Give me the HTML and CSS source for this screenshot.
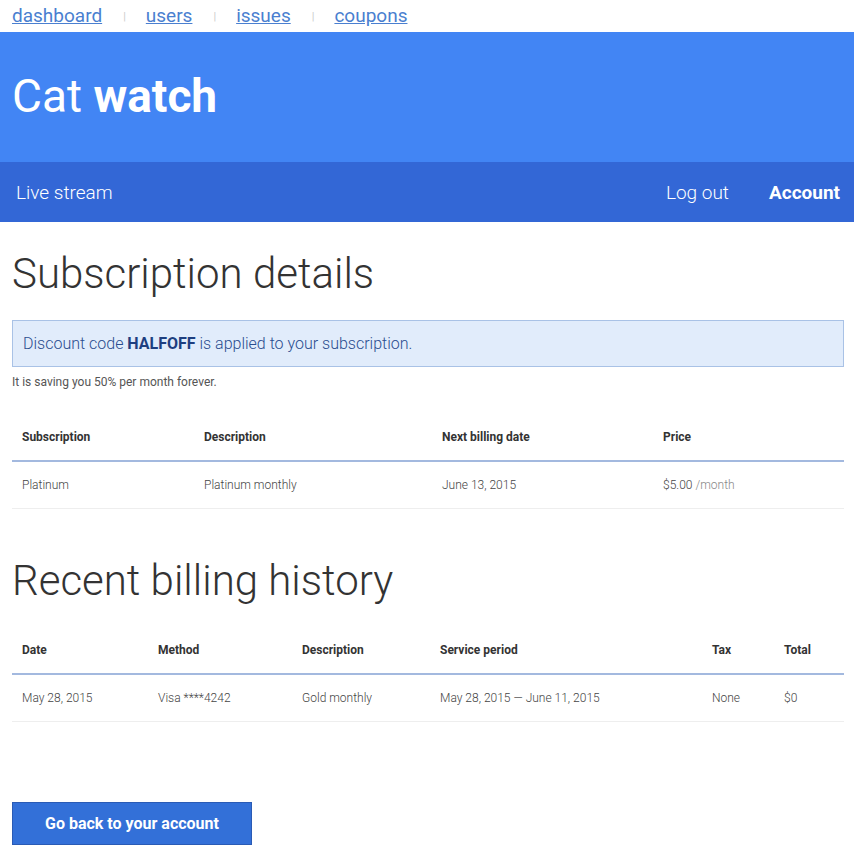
FILE: index.html
```html
<!DOCTYPE html>
<html>
<head>
<meta charset="utf-8">
<link rel="stylesheet" href="styles.css">
</head>
<body>
<nav class="toplinks">
  <a href="#">dashboard</a><span class="sep">|</span>
  <a href="#">users</a><span class="sep">|</span>
  <a href="#">issues</a><span class="sep">|</span>
  <a href="#">coupons</a>
</nav>
<header class="brand">
  <h1>Cat <b>watch</b></h1>
</header>
<div class="navbar">
  <span class="nav-item">Live stream</span>
  <div class="nav-right">
    <span class="nav-item">Log out</span>
    <span class="nav-item strong">Account</span>
  </div>
</div>
<main class="content">
  <h2>Subscription details</h2>
  <div class="notice">Discount code <b>HALFOFF</b> is applied to your subscription.</div>
  <p class="note">It is saving you 50% per month forever.</p>
  <table class="tbl sub">
    <thead>
      <tr><th class="c1">Subscription</th><th class="c2">Description</th><th class="c3">Next billing date</th><th>Price</th></tr>
    </thead>
    <tbody>
      <tr><td>Platinum</td><td>Platinum monthly</td><td>June 13, 2015</td><td>$5.00 <span class="muted">/month</span></td></tr>
    </tbody>
  </table>
  <h2 class="h2b">Recent billing history</h2>
  <table class="tbl hist">
    <thead>
      <tr><th class="d1">Date</th><th class="d2">Method</th><th class="d3">Description</th><th class="d4">Service period</th><th class="d5">Tax</th><th>Total</th></tr>
    </thead>
    <tbody>
      <tr><td>May 28, 2015</td><td>Visa ****4242</td><td>Gold monthly</td><td>May 28, 2015 — June 11, 2015</td><td>None</td><td>$0</td></tr>
    </tbody>
  </table>
  <button class="btn">Go back to your account</button>
</main>
</body>
</html>
```
FILE: styles.css
```css
html, body {
  margin: 0;
  padding: 0;
  background: #fff;
  font-family: Roboto, "Liberation Sans", sans-serif;
  color: #333;
}
.toplinks {
  height: 32px;
  padding-left: 12px;
  display: flex;
  align-items: center;
  font-size: 19px;
  font-weight: 400;
  line-height: 28px;
}
.toplinks a {
  color: #4a7fd0;
  text-decoration: underline;
}
.toplinks .sep {
  color: #ccc;
  font-size: 11px;
  margin: 2px 20px 0 21px;
}
.brand {
  background: #4285f4;
  height: 130px;
  display: flex;
  align-items: center;
  padding-left: 12px;
}
.brand h1 {
  margin: 0;
  color: #fff;
  font-size: 46px;
  font-weight: 400;
  line-height: 1;
  padding-bottom: 2px;
}
.brand h1 b { font-weight: 700; }
.navbar {
  background: #3367d6;
  height: 60px;
  display: flex;
  align-items: center;
  justify-content: space-between;
  padding: 0 14px 0 16px;
  color: #fff;
}
.nav-item {
  font-size: 19px;
  font-weight: 300;
}
.nav-right {
  display: flex;
  gap: 40px;
}
.nav-item.strong { font-weight: 700; }
.content {
  padding: 0 10px 0 12px;
}
h2 {
  font-size: 42px;
  font-weight: 300;
  color: #333;
  margin: 27px 0 21px 0;
  line-height: 50px;
}
.h2b { margin: 47px 0 17px 0; }
.notice {
  background: #e1ecfb;
  border: 1px solid #a9c2e6;
  box-sizing: border-box;
  height: 47px;
  line-height: 45px;
  padding-left: 10px;
  font-size: 16px;
  font-weight: 300;
  color: #2a4d8f;
}
.notice b { font-weight: 700; color: #1e3f80; }
.note {
  font-size: 12px;
  font-weight: 400;
  color: #555;
  margin: 8px 0 0 0;
}
.tbl {
  width: 100%;
  border-collapse: collapse;
  font-size: 12px;
  margin-top: 24px;
}
.tbl.hist { margin-top: 20px; }
.tbl th {
  text-align: left;
  font-weight: 700;
  color: #333;
  padding: 0 10px;
  height: 47px;
  border-bottom: 2px solid #a3b9df;
}
.tbl td {
  font-weight: 300;
  color: #444;
  padding: 0 10px;
  height: 46px;
  border-bottom: 1px solid #eee;
}
.muted { color: #888; }
.sub .c1 { width: 162px; }
.sub .c2 { width: 218px; }
.sub .c3 { width: 201px; }
.hist .d1 { width: 116px; }
.hist .d2 { width: 124px; }
.hist .d3 { width: 118px; }
.hist .d4 { width: 252px; }
.hist .d5 { width: 52px; }
.btn {
  display: block;
  margin-top: 80px;
  width: 240px;
  height: 43px;
  background: #3370d8;
  border: 1px solid #2a5bb5;
  color: #fff;
  font-family: Roboto, "Liberation Sans", sans-serif;
  font-size: 16px;
  font-weight: 700;
  cursor: pointer;
}
```
